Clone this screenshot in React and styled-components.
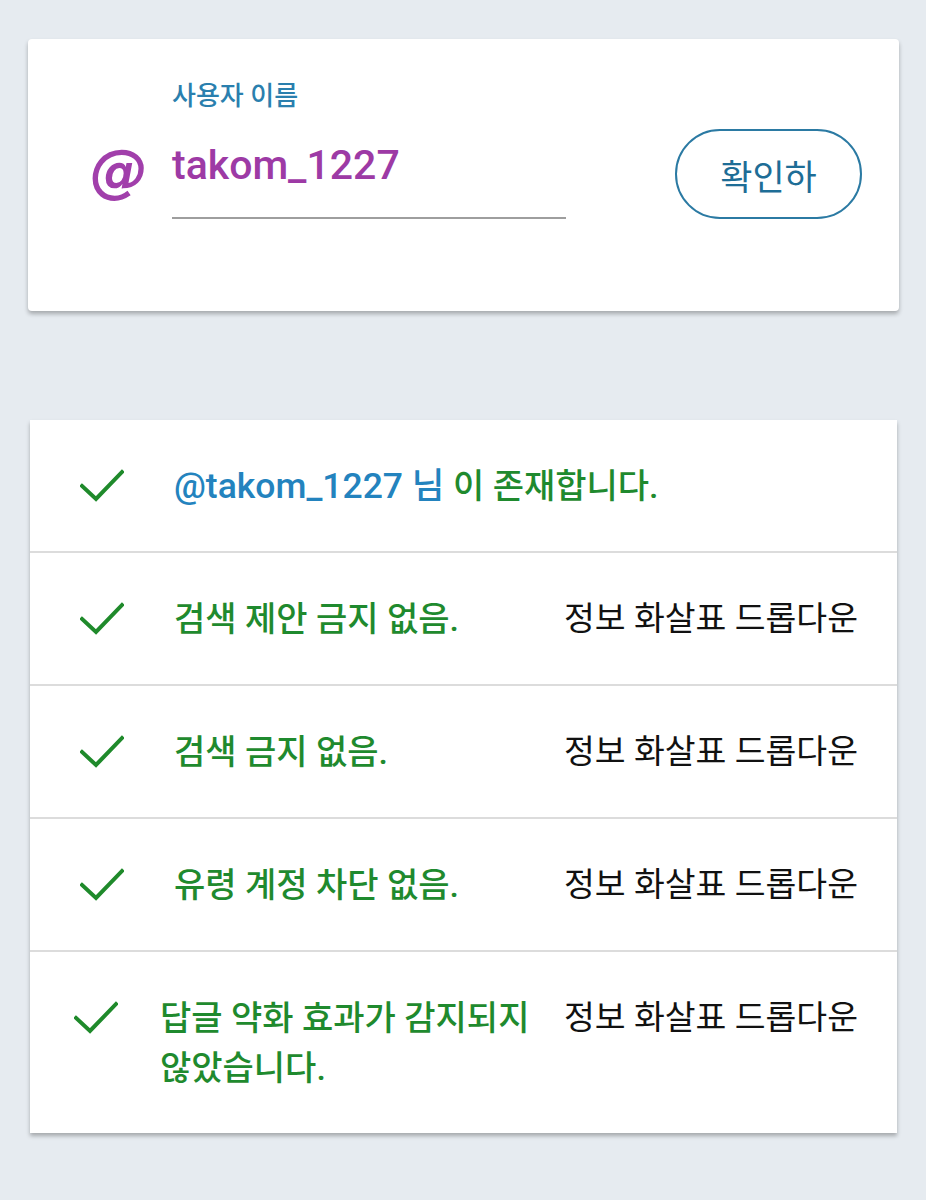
import React from 'react';
import styled, { createGlobalStyle } from 'styled-components';

const GlobalStyle = createGlobalStyle`
  html, body {
    margin: 0;
    padding: 0;
    background: #e6ebf0;
  }
  body {
    font-family: Roboto, "Noto Sans CJK KR", sans-serif;
  }
`;

const checks = [
  { id: 1, exists: true },
  { id: 2, text: '검색 제안 금지 없음.', info: '정보 화살표 드롭다운' },
  { id: 3, text: '검색 금지 없음.', info: '정보 화살표 드롭다운' },
  { id: 4, text: '유령 계정 차단 없음.', info: '정보 화살표 드롭다운' },
  {
    id: 5,
    text: '답글 약화 효과가 감지되지 않았습니다.',
    info: '정보 화살표 드롭다운',
    compact: true,
  },
];

const CheckIcon = () => (
  <svg width="44" height="34" viewBox="0 0 44 34" fill="none">
    <polyline
      points="2,17 16,30 42,3"
      stroke="#1f8a2b"
      strokeWidth="4"
      strokeLinecap="square"
      strokeLinejoin="miter"
    />
  </svg>
);

const App = () => {
  const username = 'takom_1227';

  return (
    <>
      <GlobalStyle />
      <Page>
        <SearchCard>
          <AtSign>@</AtSign>
          <Field>
            <Label>사용자 이름</Label>
            <Value>{username}</Value>
            <Underline />
          </Field>
          <ConfirmButton>확인하</ConfirmButton>
        </SearchCard>

        <ResultCard>
          {checks.map(({ id, exists, text, info, compact }) => (
            <Row key={id}>
              <IconBox compact={compact}>
                <CheckIcon />
              </IconBox>
              <Message compact={compact}>
                {exists ? (
                  <>
                    <UserName>@{username} 님</UserName> 이 존재합니다.
                  </>
                ) : (
                  text
                )}
              </Message>
              {info && <Info>{info}</Info>}
            </Row>
          ))}
        </ResultCard>
      </Page>
    </>
  );
};

export default App;

const Page = styled.div`
  display: flex;
  flex-direction: column;
  gap: 109px;
  padding: 39px 27px 60px 28px;
`;

const SearchCard = styled.div`
  display: flex;
  align-items: flex-end;
  padding: 42px 37px 92px 62px;
  background: #fff;
  border-radius: 4px;
  box-shadow: 0 3px 4px rgba(0, 0, 0, 0.28);
`;

const AtSign = styled.div`
  width: 82px;
  margin-bottom: 16px;
  font-family: "DejaVu Sans", sans-serif;
  font-size: 58px;
  font-weight: bold;
  font-style: italic;
  line-height: 64px;
  color: #a13fab;
`;

const Field = styled.div`
  display: flex;
  flex-direction: column;
  width: 394px;
`;

const Label = styled.div`
  font-size: 26px;
  font-weight: 500;
  line-height: 30px;
  color: #2a7fae;
`;

const Value = styled.div`
  margin-top: 30px;
  font-size: 41px;
  font-weight: 500;
  line-height: 48px;
  color: #9d3aa5;
`;

const Underline = styled.div`
  margin-top: 28px;
  height: 2px;
  background: #9e9e9e;
`;

const ConfirmButton = styled.button`
  margin-left: auto;
  width: 187px;
  height: 90px;
  border: 2px solid #2b7aa3;
  border-radius: 45px;
  background: #fff;
  font-family: Roboto, "Noto Sans CJK KR", sans-serif;
  font-size: 35px;
  color: #1e6d96;
  cursor: pointer;
`;

const ResultCard = styled.div`
  display: flex;
  flex-direction: column;
  margin: 0 2px;
  background: #fff;
  box-shadow: 0 3px 4px rgba(0, 0, 0, 0.28);
`;

const Row = styled.div`
  display: flex;
  align-items: flex-start;
  padding: 40.5px 39px 40.5px 0;

  & + & {
    border-top: 2px solid #dcdcdc;
  }
`;

const IconBox = styled.div`
  display: flex;
  align-items: center;
  height: 50px;
  margin-left: ${({ compact }) => (compact ? '44px' : '50px')};
`;

const Message = styled.div`
  flex: 1;
  margin-left: ${({ compact }) => (compact ? '42px' : '50px')};
  margin-right: 26px;
  font-size: 34px;
  font-weight: 500;
  line-height: 50px;
  word-break: keep-all;
  color: #1f8a2e;
`;

const UserName = styled.span`
  font-size: 35.5px;
  color: #2383be;
`;

const Info = styled.div`
  white-space: nowrap;
  font-size: 33.5px;
  line-height: 50px;
  color: #111;
`;
